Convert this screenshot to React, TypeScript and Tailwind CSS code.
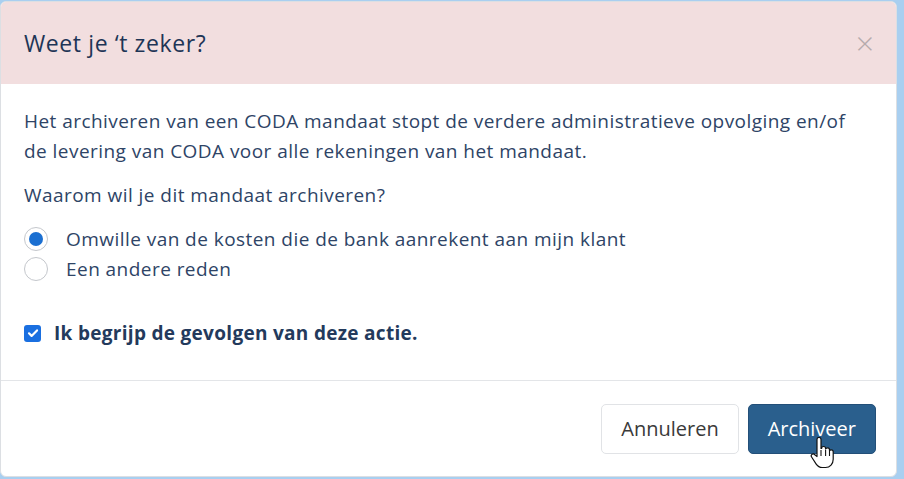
import { useState } from 'react';

function HandCursor() {
  return (
    <svg className="absolute left-[61px] top-[32px]" width="26" height="32" viewBox="0 0 26 32">
      <path
        d="M7 2.5c0-1.1.9-2 2-2s2 .9 2 2v9l.6-.1c0-1.1.9-1.9 2-1.9s2 .9 2 2v.6c.3-.8 1-1.3 1.9-1.3 1.1 0 2 .9 2 2v1c.3-.6 1-1 1.7-1 1.1 0 2 .9 2 2v7.5c0 4.5-3.2 8.2-7.6 8.2h-3.4c-2.6 0-4.6-1.3-6-3.4l-4.6-7.1c-.6-.9-.4-2.1.5-2.7.9-.6 2.1-.4 2.7.5L7 19.5z"
        fill="#fff"
        stroke="#111"
        strokeWidth="1.2"
        strokeLinejoin="round"
      />
      <path d="M11 13v6M15.6 13v6M19.5 14v5" stroke="#111" strokeWidth="1.1" />
    </svg>
  );
}

export default function App() {
  const [reason, setReason] = useState<'kosten' | 'andere'>('kosten');
  const [understood, setUnderstood] = useState(true);

  return (
    <div className="w-[904px] h-[479px] bg-[#a9cff0] pt-px font-['Open_Sans',sans-serif]">
      <div className="w-[897px] h-[476px] bg-white border border-[#dcdfe3] rounded-[6px] overflow-hidden flex flex-col">
        <div className="h-[82px] shrink-0 bg-[#f2dedf] flex items-center justify-between pl-[23px] pr-[22px]">
          <h2 className="text-[23px] text-[#1e3556] tracking-[0.6px]">Weet je ‘t zeker?</h2>
          <button className="text-[#b6abad] text-[32px] leading-none font-light">×</button>
        </div>

        <div className="flex-1 px-[23px] pt-[22px] text-[19px] tracking-[0.45px] text-[#2e4466] leading-[30px]">
          <p className="w-[840px]">
            Het archiveren van een CODA mandaat stopt de verdere administratieve opvolging en/of de levering van CODA
            voor alle rekeningen van het mandaat.
          </p>
          <p className="mt-[14px]">Waarom wil je dit mandaat archiveren?</p>

          <div className="mt-[14px] flex flex-col">
            <label className="flex items-center gap-[18px] h-[30px]" onClick={() => setReason('kosten')}>
              <span className="w-[24px] h-[24px] rounded-full border border-[#c4c7cc] flex items-center justify-center">
                {reason === 'kosten' && <span className="w-[14px] h-[14px] rounded-full bg-[#1b6fd1]" />}
              </span>
              Omwille van de kosten die de bank aanrekent aan mijn klant
            </label>
            <label className="flex items-center gap-[18px] h-[30px]" onClick={() => setReason('andere')}>
              <span className="w-[24px] h-[24px] rounded-full border border-[#c4c7cc] flex items-center justify-center">
                {reason === 'andere' && <span className="w-[14px] h-[14px] rounded-full bg-[#1b6fd1]" />}
              </span>
              Een andere reden
            </label>
          </div>

          <label
            className="mt-[34px] flex items-center gap-[13px] font-bold tracking-[0.3px] text-[#233a5c]"
            onClick={() => setUnderstood(!understood)}
          >
            <span className="w-[17px] h-[17px] rounded-[3px] bg-[#1a6fe0] flex items-center justify-center">
              {understood && (
                <svg width="12" height="12" viewBox="0 0 12 12">
                  <path d="M2 6.3l2.6 2.6L10 3.4" fill="none" stroke="#fff" strokeWidth="2.2" strokeLinecap="round" strokeLinejoin="round" />
                </svg>
              )}
            </span>
            Ik begrijp de gevolgen van deze actie.
          </label>
        </div>

        <div className="h-[96px] shrink-0 border-t border-[#e3e5e8] flex items-start justify-end gap-[9px] pt-[23px] pr-[20px]">
          <button className="h-[50px] px-[19px] rounded-[5px] border border-[#e1e3e6] bg-white text-[20px] text-[#3a3a3a]">
            Annuleren
          </button>
          <button className="relative h-[50px] px-[19px] rounded-[5px] bg-[#2a5f8d] border border-[#234f78] text-[20px] text-white">
            Archiveer
            <HandCursor />
          </button>
        </div>
      </div>
    </div>
  );
}
